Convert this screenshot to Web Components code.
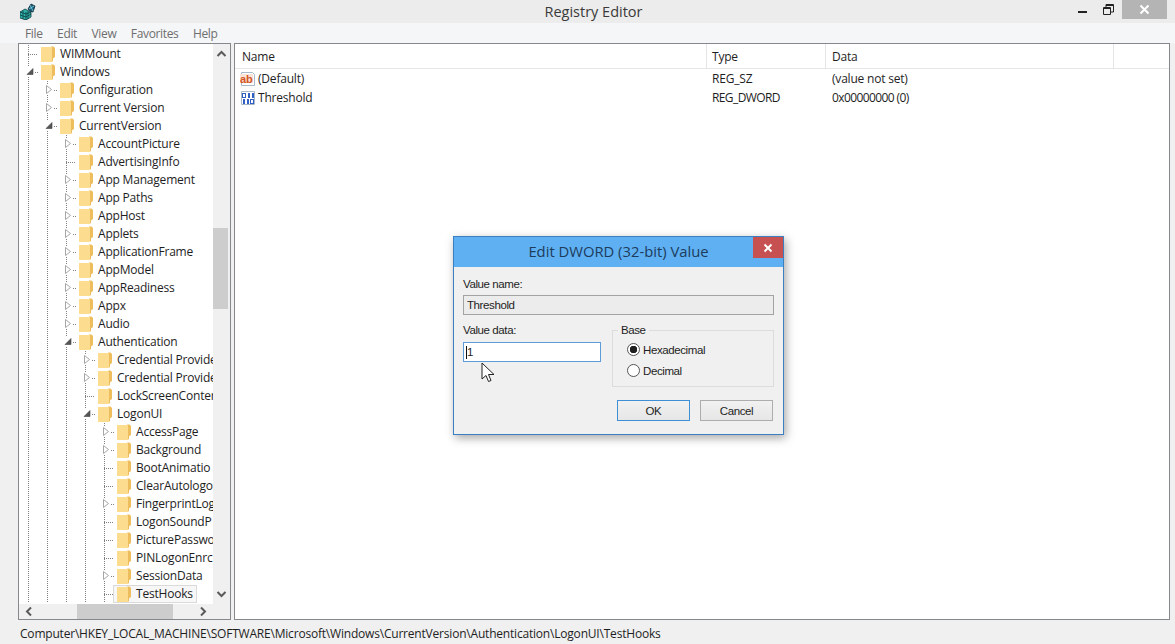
<!DOCTYPE html>
<html lang="en">

<head>
    <meta charset="UTF-8">
    <title>Registry Editor</title>
    <style>
        html, body { margin: 0; height: 100%; overflow: hidden; }
        body { font: 12px "Open Sans", "Liberation Sans", sans-serif; letter-spacing: -.2px; color: #1e1e1e; background: #f0f0f0; }
    </style>
</head>

<body>
    <reg-window>
        <reg-titlebar slot="title">Registry Editor</reg-titlebar>
        <reg-menubar slot="menu"><span>File</span><span>Edit</span><span>View</span><span>Favorites</span><span>Help</span></reg-menubar>
        <reg-tree slot="tree">
            <tree-row level="1" state="leaf">WIMMount</tree-row>
            <tree-row level="1" state="open">Windows</tree-row>
            <tree-row level="2" state="closed">Configuration</tree-row>
            <tree-row level="2" state="closed">Current Version</tree-row>
            <tree-row level="2" state="open">CurrentVersion</tree-row>
            <tree-row level="3" state="closed">AccountPicture</tree-row>
            <tree-row level="3" state="leaf">AdvertisingInfo</tree-row>
            <tree-row level="3" state="closed">App Management</tree-row>
            <tree-row level="3" state="closed">App Paths</tree-row>
            <tree-row level="3" state="closed">AppHost</tree-row>
            <tree-row level="3" state="closed">Applets</tree-row>
            <tree-row level="3" state="closed">ApplicationFrame</tree-row>
            <tree-row level="3" state="closed">AppModel</tree-row>
            <tree-row level="3" state="closed">AppReadiness</tree-row>
            <tree-row level="3" state="closed">Appx</tree-row>
            <tree-row level="3" state="closed">Audio</tree-row>
            <tree-row level="3" state="open">Authentication</tree-row>
            <tree-row level="4" state="closed">Credential Provide</tree-row>
            <tree-row level="4" state="closed">Credential Provide</tree-row>
            <tree-row level="4" state="leaf">LockScreenConter</tree-row>
            <tree-row level="4" state="open">LogonUI</tree-row>
            <tree-row level="5" state="closed">AccessPage</tree-row>
            <tree-row level="5" state="closed">Background</tree-row>
            <tree-row level="5" state="leaf">BootAnimatio</tree-row>
            <tree-row level="5" state="leaf">ClearAutologo</tree-row>
            <tree-row level="5" state="closed">FingerprintLog</tree-row>
            <tree-row level="5" state="leaf">LogonSoundP</tree-row>
            <tree-row level="5" state="leaf">PicturePasswo</tree-row>
            <tree-row level="5" state="leaf">PINLogonEnrc</tree-row>
            <tree-row level="5" state="closed">SessionData</tree-row>
            <tree-row level="5" state="leaf" selected>TestHooks</tree-row>
        </reg-tree>
        <reg-list slot="list">
            <list-row icon="ab" type="REG_SZ" data="(value not set)">(Default)</list-row>
            <list-row icon="bin" type="REG_DWORD" data="0x00000000 (0)" style="--cell-ls: -.6px">Threshold</list-row>
        </reg-list>
        <reg-status slot="status">Computer\HKEY_LOCAL_MACHINE\SOFTWARE\Microsoft\Windows\CurrentVersion\Authentication\LogonUI\TestHooks</reg-status>
    </reg-window>
    <dword-dialog></dword-dialog>

    <script>
        function shadow(el, html) {
            el.attachShadow({ mode: 'open' }).innerHTML = html;
        }

        class RegWindow extends HTMLElement {
            constructor() {
                super();
                shadow(this, `
                <style>
                    :host { display: grid; grid-template-rows: 23px 20px 1fr 24px; height: 644px; }
                    .panes { display: grid; grid-template-columns: 213px 936px; column-gap: 3px; padding-left: 18px; min-height: 0; }
                </style>
                <slot name="title"></slot>
                <slot name="menu"></slot>
                <div class="panes"><slot name="tree"></slot><slot name="list"></slot></div>
                <slot name="status"></slot>`);
            }
        }
        customElements.define('reg-window', RegWindow);

        class RegTitlebar extends HTMLElement {
            constructor() {
                super();
                shadow(this, `
                <style>
                    :host { display: grid; grid-template-columns: 1fr auto 1fr; align-items: center; background: #ececec; font-size: 14.5px; letter-spacing: 0; color: #3a3a3a; }
                    .app { display: flex; padding-left: 20px; }
                    .caption { justify-self: center; padding: 0 0 1px 12px; }
                    .btns { justify-self: end; display: flex; align-items: flex-start; height: 100%; padding-right: 8px; }
                    .btn { display: flex; align-items: center; justify-content: center; height: 19px; }
                    .min { width: 26px; }
                    .max { width: 26px; margin-right: 1px; }
                    .close { width: 45px; background: #b4b4b4; }
                </style>
                <div class="app">
                    <svg width="16" height="17" viewBox="0 0 16 17">
                        <path d="M0 9l5-3 6 3v5l-5 3-6-2z" fill="#2fb0a6" stroke="#0d3f44" stroke-width=".8"/>
                        <path d="M0 12l6 2 5-3M3 8v8M6 9v8M8 8v8M0 9l6 2 5-2" fill="none" stroke="#0d3f44" stroke-width=".8"/>
                        <path d="M8 6l3-5 4 2-2 6-3-1z" fill="#1c5c78" stroke="#0b2b3a" stroke-width=".8"/>
                        <path d="M10 2l3 6M14 3l-5 3" stroke="#7fd6e0" stroke-width=".8"/>
                    </svg>
                </div>
                <div class="caption"><slot></slot></div>
                <div class="btns">
                    <div class="btn min"><svg width="9" height="9" viewBox="0 0 9 9"><rect x="0" y="6" width="9" height="2" fill="#222"/></svg></div>
                    <div class="btn max"><svg width="11" height="11" viewBox="0 0 11 11"><path d="M.5 3.500h7v7h-7zM.5 4.500h7M3 3V.5h7.500V8H8M3 1.500h7.500" fill="none" stroke="#222"/></svg></div>
                    <div class="btn close"><svg width="11" height="11" viewBox="0 0 11 11"><path d="M1.500 1.500l8 8M9.500 1.500l-8 8" stroke="#fff" stroke-width="2"/></svg></div>
                </div>`);
            }
        }
        customElements.define('reg-titlebar', RegTitlebar);

        class RegMenubar extends HTMLElement {
            constructor() {
                super();
                shadow(this, `
                <style>
                    :host { display: block; background: #f5f6f8; color: #6e6e6e; letter-spacing: -.35px; }
                    div { display: flex; gap: 14.5px; align-items: center; height: 20px; padding-left: 25px; }
                </style>
                <div><slot></slot></div>`);
            }
        }
        customElements.define('reg-menubar', RegMenubar);

        const chevron = {
            up: 'M1.500 7L5.500 3l4 4',
            down: 'M1.500 4l4 4 4-4',
            left: 'M7 1.500L3 5.500l4 4',
            right: 'M4 1.500l4 4-4 4'
        };
        function arrow(dir) {
            return `<svg width="11" height="11" viewBox="0 0 11 11"><path d="${chevron[dir]}" fill="none" stroke="#5a5a5a" stroke-width="2"/></svg>`;
        }

        class RegTree extends HTMLElement {
            constructor() {
                super();
                shadow(this, `
                <style>
                    :host { display: grid; grid-template-columns: 1fr 17px; grid-template-rows: 1fr 15px; border: 1px solid #85888c; background: #fff; min-height: 0; height: 575px; margin-bottom: 2px; }
                    .rows { overflow: hidden; padding-top: 1px; min-width: 0; }
                    .v { display: flex; flex-direction: column; align-items: center; justify-content: space-between; background: #f0f0f0; padding: 5px 0; }
                    .h { display: flex; align-items: center; grid-column: 1; background: #f0f0f0; padding: 0 5px; }
                    .v .thumb { width: 15px; height: 81px; background: #cdcdcd; margin-top: 168px; }
                    .v .mid { flex: 1; align-self: stretch; }
                    .h .mid { flex: 1; align-self: stretch; padding-left: 42px; }
                    .h .thumb { width: 96px; height: 100%; background: #cdcdcd; }
                    .corner { background: #f0f0f0; }
                </style>
                <div class="rows"><slot></slot></div>
                <div class="v">${arrow('up')}<div class="mid"><div class="thumb"></div></div>${arrow('down')}</div>
                <div class="h">${arrow('left')}<div class="mid"><div class="thumb"></div></div>${arrow('right')}</div>
                <div class="corner"></div>`);
            }
        }
        customElements.define('reg-tree', RegTree);

        class FolderIcon extends HTMLElement {
            constructor() {
                super();
                shadow(this, `
                <style>:host { display: block; width: 14px; height: 16px; }</style>
                <svg width="14" height="16" viewBox="0 0 14 16">
                    <path d="M10 0.500h2.500l1.500 1.500v9l-3 2z" fill="#eebd5c"/>
                    <rect x="0" y="1" width="11" height="15" fill="#fcdc8e"/>
                    <path d="M11 1h1v13.500L11 16z" fill="#edbc5e"/>
                </svg>`);
            }
        }
        customElements.define('folder-icon', FolderIcon);

        class TreeRow extends HTMLElement {
            constructor() {
                super();
                const level = +this.getAttribute('level');
                const state = this.getAttribute('state');
                const guides = '<i class="guide"></i>'.repeat(level - 1);
                let glyph = '';
                if (state === 'closed') glyph = '<svg class="tri" width="8" height="11" viewBox="0 0 8 11"><path d="M1.500 1.500l5 4-5 4z" fill="#fff" stroke="#a6a6a6"/></svg>';
                if (state === 'open') glyph = '<svg class="tri" width="8" height="11" viewBox="0 0 8 11"><path d="M7 2.500v6H1z" fill="#555" stroke="#444" stroke-width=".6"/></svg>';
                shadow(this, `
                <style>
                    :host { display: flex; height: 18px; align-items: stretch; white-space: nowrap; padding-left: 9px; }
                    .guide, .exp { flex: none; background: repeating-linear-gradient(to bottom, #808080 0 1px, transparent 1px 2px) 0 0 / 1px 100% no-repeat; }
                    .guide { width: 19px; }
                    .exp { width: 10px; position: relative; }
                    .exp::after { content: ""; position: absolute; top: 9px; right: 0; height: 1px; background: repeating-linear-gradient(to right, #808080 0 1px, transparent 1px 2px); width: ${state === 'leaf' ? 10 : 3}px; }
                    .tri { position: absolute; left: -2px; top: 3px; background: #fff; }
                    .label { display: flex; align-items: center; gap: 5px; margin-left: 3px; }
                    .label span { margin-bottom: 2px; }
                    :host([selected]) .label { margin-left: -1px; padding: 0 3px; border: 1px solid #dadada; background: #f7f7f7; height: 16px; }
                </style>
                ${guides}<i class="exp">${glyph}</i>
                <div class="label"><folder-icon></folder-icon><span><slot></slot></span></div>`);
            }
        }
        customElements.define('tree-row', TreeRow);

        class RegList extends HTMLElement {
            constructor() {
                super();
                shadow(this, `
                <style>
                    :host { display: block; border: 1px solid #85888c; background: #fff; height: 575px; --cols: 472px 119px 288px 1fr; }
                    .head { display: grid; grid-template-columns: var(--cols); height: 24px; border-bottom: 1px solid #e5e5e5; }
                    .head span { display: flex; align-items: center; padding-left: 6px; border-right: 1px solid #e5e5e5; }
                    .head span:first-child { padding-left: 7px; }
                    .head span:nth-child(2) { padding-left: 5px; }
                    .head span:last-child { border-right: 0; }
                </style>
                <div class="head"><span>Name</span><span>Type</span><span>Data</span><span></span></div>
                <div><slot></slot></div>`);
            }
        }
        customElements.define('reg-list', RegList);

        const valueIcons = {
            ab: `<svg width="16" height="16" viewBox="0 0 16 16">
                    <path d="M1.500 1.500h11l2 2v11h-13z" fill="#fff" stroke="#a9b8c9"/>
                    <rect x="0" y="3" width="13" height="9" fill="#fbe3d8"/>
                    <text x="0" y="11.500" font-family="Liberation Sans" font-weight="700" font-size="11" letter-spacing="0" fill="#d3541f">ab</text>
                </svg>`,
            bin: `<svg width="16" height="16" viewBox="0 0 16 16">
                    <path d="M1.500 1.500h13v13h-13z" fill="#fff" stroke="#a9b8c9"/>
                    <path d="M2 3h4v5H2zM8 3h2v5H8zM12 3h2v5h-2zM3 9h2v5H3zM7 9h2v5H7zM10 9h4v5h-4z" fill="#2f5fc4"/>
                    <path d="M3 4h2v3H3zM11 10h2v3h-2z" fill="#fff"/>
                </svg>`
        };

        class ListRow extends HTMLElement {
            constructor() {
                super();
                shadow(this, `
                <style>
                    :host { display: grid; grid-template-columns: 472px 120px 1fr; height: 19px; align-items: center; }
                    .name { display: flex; align-items: center; gap: 2px; padding-left: 5px; }
                    svg { display: block; }
                    .type, .data { padding-left: 5px; letter-spacing: var(--cell-ls, -.2px); }
                </style>
                <div class="name">${valueIcons[this.getAttribute('icon')]}<span><slot></slot></span></div>
                <div class="type">${this.getAttribute('type')}</div>
                <div class="data">${this.getAttribute('data')}</div>`);
            }
        }
        customElements.define('list-row', ListRow);

        class RegStatus extends HTMLElement {
            constructor() {
                super();
                shadow(this, `
                <style>:host { display: flex; align-items: center; padding: 2px 0 0 20px; background: #f0f0f0; white-space: nowrap; }</style>
                <slot></slot>`);
            }
        }
        customElements.define('reg-status', RegStatus);

        class DlgButton extends HTMLElement {
            constructor() {
                super();
                shadow(this, `
                <style>
                    :host { display: flex; align-items: center; justify-content: center; width: 71px; height: 19px; border: 1px solid #adadad; background: linear-gradient(#f1f1f1, #e6e6e6); }
                    :host([default]) { border-color: #3f8fd6; }
                </style>
                <slot></slot>`);
            }
        }
        customElements.define('dlg-button', DlgButton);

        class DlgRadio extends HTMLElement {
            constructor() {
                super();
                shadow(this, `
                <style>
                    :host { display: flex; align-items: center; gap: 3px; height: 21px; margin-left: 14px; }
                    i { display: block; box-sizing: border-box; width: 13px; height: 13px; border: 1px solid #555; border-radius: 50%; background: #fff; }
                    :host([checked]) i { background: radial-gradient(circle, #1e1e1e 0 3.500px, #fff 4px); }
                </style>
                <i></i><slot></slot>`);
            }
        }
        customElements.define('dlg-radio', DlgRadio);

        class DwordDialog extends HTMLElement {
            constructor() {
                super();
                shadow(this, `
                <style>
                    :host { display: block; position: absolute; left: 453px; top: 236px; width: 329px; height: 197px; border: 1px solid #3c7fc0; background: #f0f0f0; box-shadow: 2px 3px 9px rgba(0, 0, 0, .35); }
                    .title { position: relative; height: 30px; background: #5eb0f2; color: #1d3c5c; font-size: 14.8px; letter-spacing: 0; display: flex; align-items: center; justify-content: center; padding-bottom: 3px; box-sizing: border-box; }
                    .x { position: absolute; right: 0; top: 0; width: 30px; height: 21px; background: #c75050; display: flex; align-items: center; justify-content: center; }
                    .body { padding: 9px 9px 0; display: grid; grid-template-columns: 138px 162px; column-gap: 11px; font-family: "Liberation Sans", sans-serif; font-size: 11.5px; letter-spacing: -.4px; }
                    .name { grid-column: 1 / 3; height: 19px; line-height: 16px; }
                    .input { box-sizing: border-box; display: flex; align-items: center; padding-left: 3px; }
                    .ro { grid-column: 1 / 3; height: 20px; margin-bottom: 7px; background: #ececec; border: 1px solid #a3a3a3; }
                    .label { height: 17px; line-height: 17px; }
                    .data { height: 20px; margin-top: 3px; background: #fff; border: 1px solid #5a9bd8; padding-left: 2px; }
                    .caret { width: 1px; height: 13px; background: #111; }
                    fieldset { box-sizing: border-box; margin: 0; padding: 0; border: 1px solid #dcdcdc; height: 65px; }
                    legend { padding: 0 3px; margin-left: 5px; line-height: 17px; }
                    .btns { grid-column: 1 / 3; display: flex; justify-content: flex-end; gap: 10px; margin-top: 13px; padding-right: 1px; }
                    .cursor { position: absolute; left: 27px; top: 125px; }
                </style>
                <div class="title">Edit DWORD (32-bit) Value
                    <div class="x"><svg width="10" height="10" viewBox="0 0 10 10"><path d="M1.500 1.500l7 7M8.500 1.500l-7 7" stroke="#fff" stroke-width="2"/></svg></div>
                </div>
                <div class="body">
                    <div class="name">Value name:</div>
                    <div class="input ro">Threshold</div>
                    <div><div class="label">Value data:</div><div class="input data"><span class="caret"></span>1</div></div>
                    <fieldset>
                        <legend>Base</legend>
                        <dlg-radio checked>Hexadecimal</dlg-radio>
                        <dlg-radio>Decimal</dlg-radio>
                    </fieldset>
                    <div class="btns"><dlg-button default>OK</dlg-button><dlg-button>Cancel</dlg-button></div>
                </div>
                <svg class="cursor" width="14" height="21" viewBox="0 0 14 21"><path d="M1 1v16l4-3.500 2.500 6 2.500-1-2.500-6H13z" fill="#fff" stroke="#222"/></svg>`);
            }
        }
        customElements.define('dword-dialog', DwordDialog);
    </script>
</body>

</html>
